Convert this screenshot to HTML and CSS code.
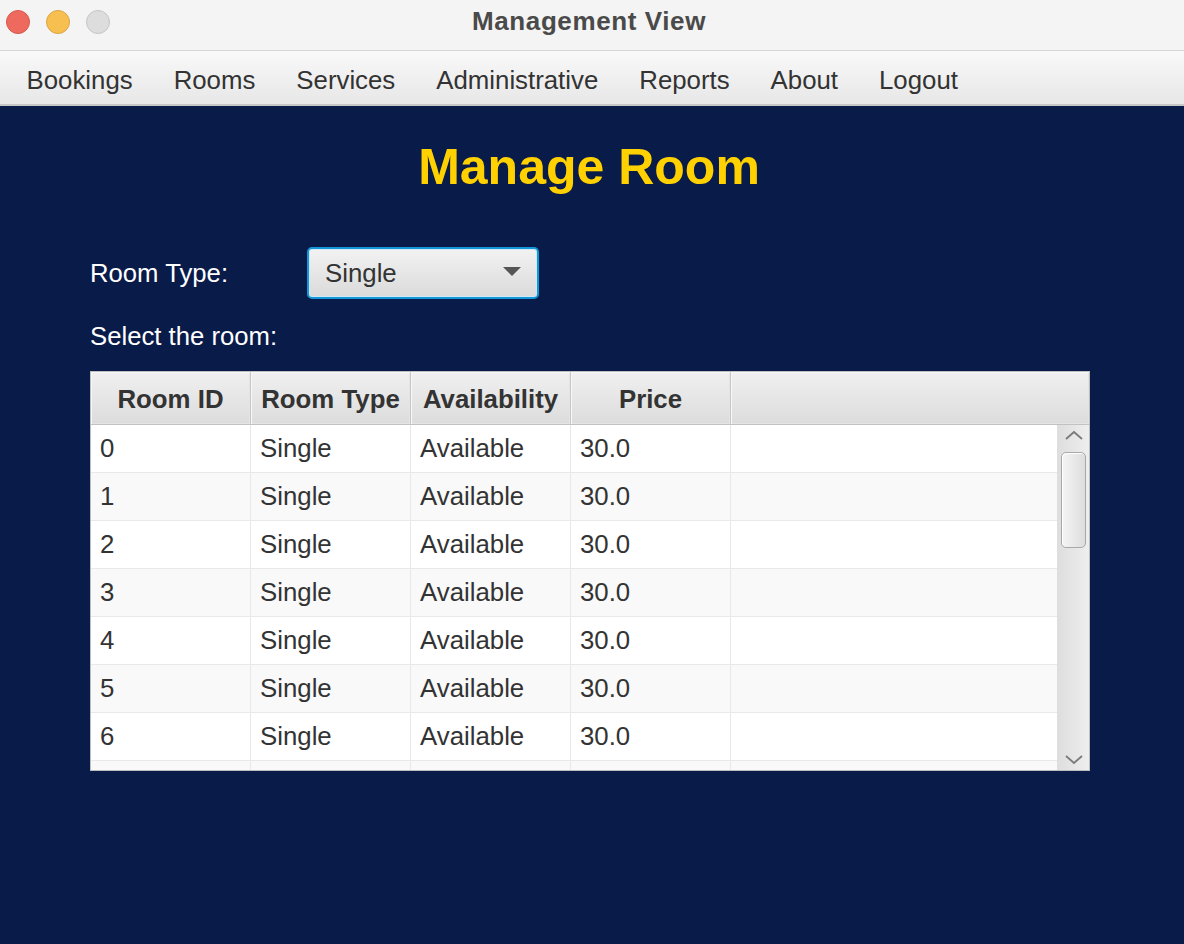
FILE: index.html
```html
<!DOCTYPE html>
<html>
<head>
<meta charset="utf-8">
<title>Management View</title>
<link rel="stylesheet" href="styles.css">
</head>
<body>
<div class="window">
  <header class="titlebar">
    <div class="lights">
      <span class="light red"></span>
      <span class="light yellow"></span>
      <span class="light gray"></span>
    </div>
    <div class="wintitle">Management View</div>
  </header>
  <nav class="menubar">
    <span class="menu">Bookings</span>
    <span class="menu">Rooms</span>
    <span class="menu">Services</span>
    <span class="menu">Administrative</span>
    <span class="menu">Reports</span>
    <span class="menu">About</span>
    <span class="menu">Logout</span>
  </nav>
  <main class="content">
    <h1 class="heading">Manage Room</h1>
    <div class="type-row">
      <span class="label type-label">Room Type:</span>
      <div class="combo">
        <span class="combo-text">Single</span>
        <span class="combo-arrow"></span>
      </div>
    </div>
    <div class="label select-label">Select the room:</div>
    <div class="table">
      <div class="thead">
        <div class="th">Room ID</div>
        <div class="th">Room Type</div>
        <div class="th">Availability</div>
        <div class="th">Price</div>
        <div class="th filler"></div>
      </div>
      <div class="tbody">
        <div class="rows">
          <div class="tr"><div class="td">0</div><div class="td">Single</div><div class="td">Available</div><div class="td">30.0</div><div class="td last"></div></div>
          <div class="tr odd"><div class="td">1</div><div class="td">Single</div><div class="td">Available</div><div class="td">30.0</div><div class="td last"></div></div>
          <div class="tr"><div class="td">2</div><div class="td">Single</div><div class="td">Available</div><div class="td">30.0</div><div class="td last"></div></div>
          <div class="tr odd"><div class="td">3</div><div class="td">Single</div><div class="td">Available</div><div class="td">30.0</div><div class="td last"></div></div>
          <div class="tr"><div class="td">4</div><div class="td">Single</div><div class="td">Available</div><div class="td">30.0</div><div class="td last"></div></div>
          <div class="tr odd"><div class="td">5</div><div class="td">Single</div><div class="td">Available</div><div class="td">30.0</div><div class="td last"></div></div>
          <div class="tr"><div class="td">6</div><div class="td">Single</div><div class="td">Available</div><div class="td">30.0</div><div class="td last"></div></div>
          <div class="tr odd"><div class="td"></div><div class="td"></div><div class="td"></div><div class="td"></div><div class="td last"></div></div>
        </div>
        <div class="scrollbar">
          <svg class="chev" width="20" height="12" viewBox="0 0 20 12"><path d="M2 10 L10 3 L18 10" fill="none" stroke="#7a7a7a" stroke-width="1.8"/></svg>
          <div class="track"><div class="thumb"></div></div>
          <svg class="chev" width="20" height="12" viewBox="0 0 20 12"><path d="M2 2 L10 9 L18 2" fill="none" stroke="#7a7a7a" stroke-width="1.8"/></svg>
        </div>
      </div>
    </div>
  </main>
</div>
</body>
</html>
```

FILE: styles.css
```css
* { box-sizing: border-box; }
html, body { margin: 0; padding: 0; }
body {
  width: 1184px;
  height: 944px;
  overflow: hidden;
  font-family: "Liberation Sans", Arial, sans-serif;
  background: #091b49;
}
.window {
  display: flex;
  flex-direction: column;
  height: 944px;
}
.titlebar {
  height: 51px;
  flex: none;
  background: #f3f4f3;
  border-bottom: 1px solid #d6d6d6;
  display: flex;
  align-items: center;
  position: relative;
}
.lights {
  display: flex;
  gap: 16px;
  padding-left: 6px;
  margin-top: -6px;
}
.light {
  width: 24px;
  height: 24px;
  border-radius: 50%;
  display: block;
}
.light.red { background: #ee6a5e; border: 1px solid #d8574c; }
.light.yellow { background: #f6bf50; border: 1px solid #dba544; }
.light.gray { background: #dcdddc; border: 1px solid #c5c5c5; }
.wintitle {
  position: absolute;
  left: 0;
  right: 0;
  top: 6px;
  text-align: center;
  font-size: 26px;
  letter-spacing: 0.6px;
  font-weight: bold;
  color: #4a4a4a;
  padding-right: 6px;
}
.menubar {
  height: 55px;
  flex: none;
  background: linear-gradient(#f9f9f9, #e7e7e7);
  border-bottom: 2px solid #c6c6c6;
  display: flex;
  align-items: center;
  padding-left: 6px;
  padding-top: 5px;
}
.menu {
  font-size: 25.8px;
  color: #333;
  padding: 0 20.5px;
}
.content {
  flex: 1;
  display: flex;
  flex-direction: column;
  padding: 31px 94px 0 90px;
}
.heading {
  margin: 0 -94px 0 -90px;
  height: 60px;
  line-height: 60px;
  text-align: center;
  font-size: 50px;
  font-weight: bold;
  color: #ffd100;
  padding-right: 6px;
}
.label {
  font-size: 25.7px;
  color: #ffffff;
}
.type-row {
  margin-top: 50px;
  display: flex;
  align-items: center;
  height: 52px;
}
.type-label {
  width: 217px;
  flex: none;
  padding-top: 1px;
}
.combo {
  width: 232px;
  height: 52px;
  border: 2px solid #1497d8;
  border-radius: 5px;
  box-shadow: inset 0 0 0 1px #cfe9f6;
  background: linear-gradient(#f2f2f2, #dadada);
  display: flex;
  align-items: center;
  justify-content: space-between;
  padding: 0 16px 0 16px;
}
.combo-text {
  font-size: 25.8px;
  color: #333;
  padding-top: 1px;
}
.combo-arrow {
  width: 0;
  height: 0;
  border-left: 9px solid transparent;
  border-right: 9px solid transparent;
  border-top: 9px solid #555;
  margin-top: -4px;
}
.select-label {
  margin-top: 22px;
  height: 30px;
  line-height: 30px;
}
.table {
  margin-top: 20px;
  width: 1000px;
  height: 400px;
  border: 1px solid #bdbdbd;
  background: #fff;
  display: flex;
  flex-direction: column;
}
.thead {
  height: 53px;
  flex: none;
  display: grid;
  grid-template-columns: 160px 160px 160px 160px 1fr;
  border-bottom: 1px solid #c2c2c2;
}
.th {
  background: linear-gradient(#f0f0f0, #dcdcdc);
  border-right: 1px solid #c6c6c6;
  box-shadow: inset 1px 1px 0 #f8f8f8, inset -1px -1px 0 #e4e4e4;
  font-size: 25.8px;
  font-weight: bold;
  color: #333;
  display: flex;
  align-items: center;
  justify-content: center;
  padding-top: 3px;
}
.th.filler { border-right: none; }
.tbody {
  flex: 1;
  display: flex;
  overflow: hidden;
}
.rows {
  flex: 1;
  overflow: hidden;
}
.tr {
  height: 48px;
  display: grid;
  grid-template-columns: 160px 160px 160px 160px 1fr;
  border-bottom: 1px solid #e9e9e9;
  background: #ffffff;
}
.tr.odd { background: #f9f9f9; }
.td {
  border-right: 1px solid #e8e8e8;
  font-size: 25.8px;
  color: #333;
  display: flex;
  align-items: center;
  padding-left: 9px;
  padding-bottom: 1px;
}
.td.last { border-right: none; }
.scrollbar {
  width: 32px;
  flex: none;
  border-left: 1px solid #dedede;
  background: linear-gradient(to right, #dedede, #eeeeee);
  display: flex;
  flex-direction: column;
  align-items: center;
}
.chev {
  display: block;
  flex: none;
  margin: 4px 0;
}
.track {
  flex: 1;
  width: 100%;
  display: flex;
  justify-content: center;
}
.thumb {
  width: 25px;
  height: 96px;
  margin-top: 7px;
  margin-right: 1px;
  border: 1px solid #a8a8a8;
  border-radius: 5px;
  background: linear-gradient(to right, #f5f5f5, #dddddd);
  box-shadow: inset 1px 1px 0 #ffffff;
}
```
